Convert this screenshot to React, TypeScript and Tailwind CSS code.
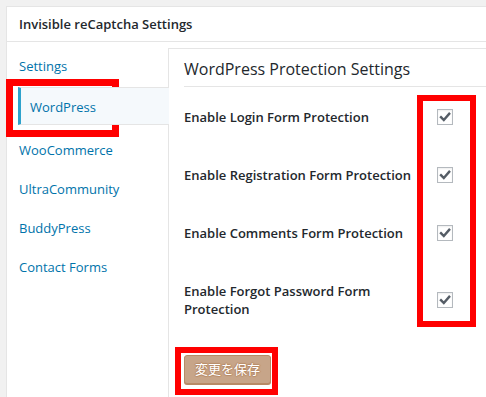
import React from "react";

const font = { fontFamily: '"Open Sans", "Noto Sans CJK JP", sans-serif' };

function Check() {
  return (
    <div className="w-[16px] h-[16px] border border-[#b4b9be] bg-white shadow-[inset_0_1px_2px_rgba(0,0,0,0.07)] flex items-center justify-center">
      <svg width="14" height="14" viewBox="0 0 14 14">
        <path d="M3 7.2 L5.8 10 L11.2 3.8" fill="none" stroke="#555d66" strokeWidth="2.4" strokeLinecap="square" />
      </svg>
    </div>
  );
}

function Row({ children, two, first }: { children: React.ReactNode; two?: boolean; first?: boolean }) {
  return (
    <div className={"flex items-center pb-[20px] " + (first ? "pt-[21px]" : "pt-[20px]")}>
      <div className={"w-[252px] text-[13px] leading-[18px] font-semibold text-[#23282d] " + (two ? "" : "whitespace-nowrap")}>
        {children}
      </div>
      <div className="ml-[1px]">
        <Check />
      </div>
    </div>
  );
}

export default function App() {
  const navItem = "h-[39px] flex items-center pl-[1px] pt-[4px] text-[13px] text-[#0073aa]";
  return (
    <div className="relative w-[486px] h-[397px] overflow-hidden bg-[#f1f1f1]" style={font}>
      <div className="absolute left-[6px] top-[6px] w-[560px] h-[420px] bg-white border-l border-t border-[#e5e5e5]">
        <div className="h-[35px] border-b border-[#e5e5e5] flex items-center pl-[12px] pt-[2px] text-[13px] font-semibold text-[#23282d]">
          Invisible reCaptcha Settings
        </div>
        <div className="flex">
          <div className="w-[161px] pl-[11px] shrink-0">
            <div className="h-[45px] flex items-center pl-[1px] pt-[4px] text-[13px] text-[#0073aa]">Settings</div>
            <div className="relative z-10 -mr-px h-[38px] border-y border-[#e5e5e5] border-l-[3px] border-l-[#2ea2cc] bg-[#f5f9fc] flex items-center pl-[9px] pt-[4px] text-[13px] text-[#0073aa]">
              WordPress
            </div>
            <div className="pt-[4px]">
              <div className={navItem}>WooCommerce</div>
              <div className={navItem}>UltraCommunity</div>
              <div className={navItem}>BuddyPress</div>
              <div className={navItem}>Contact Forms</div>
            </div>
          </div>
          <div className="flex-1 mt-[6px] border-l border-t border-[#e5e5e5] pl-[15px] h-[400px]">
            <div className="h-[38px] border-b border-[#e5e5e5] flex items-center pt-[2px] text-[16px] text-[#23282d]">
              WordPress Protection Settings
            </div>
            <Row first>Enable Login Form Protection</Row>
            <Row>Enable Registration Form Protection</Row>
            <Row>Enable Comments Form Protection</Row>
            <Row two>
              Enable Forgot Password Form
              <br />
              Protection
            </Row>
            <div className="mt-[17px]">
              <button className="h-[29px] px-[10px] rounded-[3px] bg-[#c7a589] border border-[#b78a66] shadow-[0_1px_0_#b78a66] text-white text-[13px] [text-shadow:0_-1px_1px_#b78a66,1px_0_1px_#b78a66,0_1px_1px_#b78a66,-1px_0_1px_#b78a66]">
                変更を保存
              </button>
            </div>
          </div>
        </div>
      </div>
      <div className="absolute left-[6px] top-[79px] w-[113px] h-[58px] border-[7px] border-[#ff0000]" />
      <div className="absolute left-[417px] top-[95px] w-[59px] h-[232px] border-[6px] border-[#ff0000]" />
      <div className="absolute left-[175px] top-[347px] w-[103px] h-[48px] border-[6px] border-[#ff0000]" />
    </div>
  );
}
